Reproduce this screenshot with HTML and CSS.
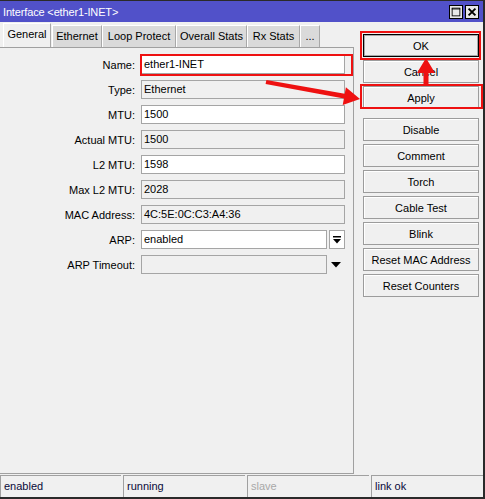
FILE: index.html
```html
<!DOCTYPE html>
<html lang="en">
<head>
    <meta charset="UTF-8">
    <title>Interface &lt;ether1-INET&gt;</title>
    <link rel="stylesheet" href="styles.css">
</head>
<body>
    <div class="window">
        <div class="titlebar">
            <span class="title">Interface &lt;ether1-INET&gt;</span>
            <div class="title-btns">
                <span class="tbtn">
                    <svg width="14" height="14" viewBox="0 0 14 14"><rect x="2.5" y="2.5" width="9" height="9" fill="none" stroke="#000"/><line x1="2" y1="3.5" x2="12" y2="3.5" stroke="#000"/></svg>
                </span>
                <span class="tbtn">
                    <svg width="14" height="14" viewBox="0 0 14 14"><path d="M3 3 L11 11 M11 3 L3 11" stroke="#000" stroke-width="2.2"/></svg>
                </span>
            </div>
        </div>

        <div class="main">
            <div class="left">
                <div class="tabs">
                    <div class="tab active t-general">General</div>
                    <div class="tab t-ethernet">Ethernet</div>
                    <div class="tab t-loop">Loop Protect</div>
                    <div class="tab t-overall">Overall Stats</div>
                    <div class="tab t-rx">Rx Stats</div>
                    <div class="tab t-more">...</div>
                </div>
                <div class="panel">
                    <div class="row">
                        <label>Name:</label>
                        <div class="field">ether1-INET</div>
                    </div>
                    <div class="row">
                        <label>Type:</label>
                        <div class="field readonly">Ethernet</div>
                    </div>
                    <div class="row">
                        <label>MTU:</label>
                        <div class="field">1500</div>
                    </div>
                    <div class="row">
                        <label>Actual MTU:</label>
                        <div class="field readonly">1500</div>
                    </div>
                    <div class="row">
                        <label>L2 MTU:</label>
                        <div class="field">1598</div>
                    </div>
                    <div class="row">
                        <label>Max L2 MTU:</label>
                        <div class="field readonly">2028</div>
                    </div>
                    <div class="row">
                        <label>MAC Address:</label>
                        <div class="field readonly">4C:5E:0C:C3:A4:36</div>
                    </div>
                    <div class="row">
                        <label>ARP:</label>
                        <div class="field short">enabled</div>
                        <span class="drop-btn">
                            <svg width="10" height="10" viewBox="0 0 10 10"><rect x="1" y="1" width="8" height="1.5" fill="#000"/><path d="M1 4 H9 L5 8.5 Z" fill="#000"/></svg>
                        </span>
                    </div>
                    <div class="row">
                        <label>ARP Timeout:</label>
                        <div class="field short readonly"></div>
                        <span class="drop-plain">
                            <svg width="12" height="8" viewBox="0 0 12 8"><path d="M1 1 H11 L6 6.5 Z" fill="#000"/></svg>
                        </span>
                    </div>
                </div>
            </div>

            <div class="actions">
                <button class="btn default">OK</button>
                <button class="btn">Cancel</button>
                <button class="btn">Apply</button>
                <div class="btn-list">
                    <button class="btn">Disable</button>
                    <button class="btn">Comment</button>
                    <button class="btn">Torch</button>
                    <button class="btn">Cable Test</button>
                    <button class="btn">Blink</button>
                    <button class="btn">Reset MAC Address</button>
                    <button class="btn">Reset Counters</button>
                </div>
            </div>
        </div>

        <div class="statusbar">
            <div class="status s1">enabled</div>
            <div class="status s2">running</div>
            <div class="status s3 dim">slave</div>
            <div class="status s4">link ok</div>
        </div>

        <!-- red annotations drawn over the window -->
        <svg class="marks" width="485" height="499" viewBox="0 0 485 499">
            <rect x="141" y="55" width="211" height="20" fill="none" stroke="#ee1111" stroke-width="2"/>
            <rect x="361" y="32" width="119" height="27" fill="none" stroke="#ee1111" stroke-width="2"/>
            <rect x="361" y="85" width="121" height="23" fill="none" stroke="#ee1111" stroke-width="2"/>
            <polygon points="266.4,80 344.7,93.7 345.9,87.3 360,99 342.7,105 343.9,98.6 265.6,84" fill="#ee1111"/>
            <polygon points="426,58 435,73 428.5,73 428.5,86 423.5,86 423.5,73 417,73" fill="#ee1111"/>
        </svg>
    </div>
</body>
</html>
```

FILE: styles.css
```css
/* General reset */
* {
    margin: 0;
    padding: 0;
    box-sizing: border-box;
}

body {
    font-family: "Liberation Sans", Arial, sans-serif;
    font-size: 11px;
    color: #000;
    background-color: #f0f0f0;
}

/* Window frame */
.window {
    position: relative;
    width: 485px;
    height: 499px;
    background-color: #f0f0f0;
    border-top: 1px solid #2a2a2a;
    border-right: 2px solid #2a2a2a;
    border-bottom: 2px solid #2a2a2a;
    display: flex;
    flex-direction: column;
}

/* Title bar */
.titlebar {
    height: 21px;
    background-color: #5151c9;
    color: #fff;
    display: flex;
    align-items: center;
    justify-content: space-between;
    padding-left: 3px;
    padding-right: 4px;
}

.title {
    font-size: 11px;
    padding-top: 1px;
    letter-spacing: -0.15px;
}

.title-btns {
    display: flex;
    gap: 2px;
}

.tbtn {
    width: 14px;
    height: 14px;
    background-color: #e8e8e8;
    border: 1px solid #000;
    display: flex;
    align-items: center;
    justify-content: center;
}

.tbtn svg {
    width: 12px;
    height: 12px;
}

/* Main area */
.main {
    height: 452px;
    display: flex;
}

.left {
    width: 354px;
    display: flex;
    flex-direction: column;
}

/* Tabs */
.tabs {
    height: 25px;
    display: flex;
    align-items: flex-end;
    padding-left: 3px;
}

.tab {
    height: 22px;
    line-height: 21px;
    text-align: center;
    white-space: nowrap;
    background-color: #dadada;
    border-top: 1px solid #fff;
    border-left: 1px solid #fff;
    border-right: 1px solid #a8a8a8;
}

.tab.active {
    height: 24px;
    line-height: 20px;
    background-color: #f0f0f0;
    margin-right: 1px;
}

.t-general { width: 48px; }
.t-ethernet { width: 50px; }
.t-loop { width: 74px; }
.t-overall { width: 71px; }
.t-rx { width: 53px; }
.t-more { width: 20px; }

/* Form panel */
.panel {
    flex: 1;
    border-top: 1px solid #a0a0a0;
    border-right: 1px solid #a0a0a0;
    border-bottom: 1px solid #a0a0a0;
    padding-top: 7px;
    display: flex;
    flex-direction: column;
    gap: 6px;
}

.row {
    height: 19px;
    display: flex;
    align-items: center;
}

.row label {
    width: 135px;
    text-align: right;
    margin-right: 6px;
}

.field {
    width: 204px;
    height: 19px;
    line-height: 17px;
    padding-left: 2px;
    background-color: #fff;
    border: 1px solid #a5a5a5;
}

.field.readonly {
    background-color: #f0f0f0;
}

.field.short {
    width: 186px;
}

.drop-btn {
    width: 16px;
    height: 19px;
    margin-left: 2px;
    background-color: #fff;
    border: 1px solid #a5a5a5;
    display: flex;
    align-items: center;
    justify-content: center;
}

.drop-plain {
    width: 18px;
    height: 19px;
    display: flex;
    align-items: center;
    justify-content: center;
}

/* Right side buttons */
.actions {
    width: 129px;
    padding-top: 12px;
    padding-left: 9px;
    display: flex;
    flex-direction: column;
    gap: 3px;
}

.btn-list {
    margin-top: 6px;
    display: flex;
    flex-direction: column;
    gap: 3px;
}

.btn {
    width: 116px;
    height: 23px;
    font-family: "Liberation Sans", Arial, sans-serif;
    font-size: 11px;
    color: #000;
    background-color: #f0f0f0;
    border: 1px solid #9c9c9c;
    box-shadow: inset 1px 1px 0 #fff;
}

.btn.default {
    border: 1px solid #000;
    box-shadow: inset 0 0 0 1px #a8a8a8;
}

/* Status bar */
.statusbar {
    height: 23px;
    padding-top: 1px;
    display: flex;
}

.status {
    height: 22px;
    line-height: 21px;
    padding-left: 3px;
    border-top: 1px solid #a0a0a0;
    border-left: 1px solid #a0a0a0;
    color: #0a0a3a;
}

.s1 { width: 121px; margin-right: 2px; }
.s2 { width: 122px; margin-right: 2px; }
.s3 { width: 122px; margin-right: 2px; }
.s4 { width: 112px; }

.status.dim {
    color: #a8a8a8;
}

/* Annotation overlay */
.marks {
    position: absolute;
    left: 0;
    top: -1px;
    pointer-events: none;
}
```
